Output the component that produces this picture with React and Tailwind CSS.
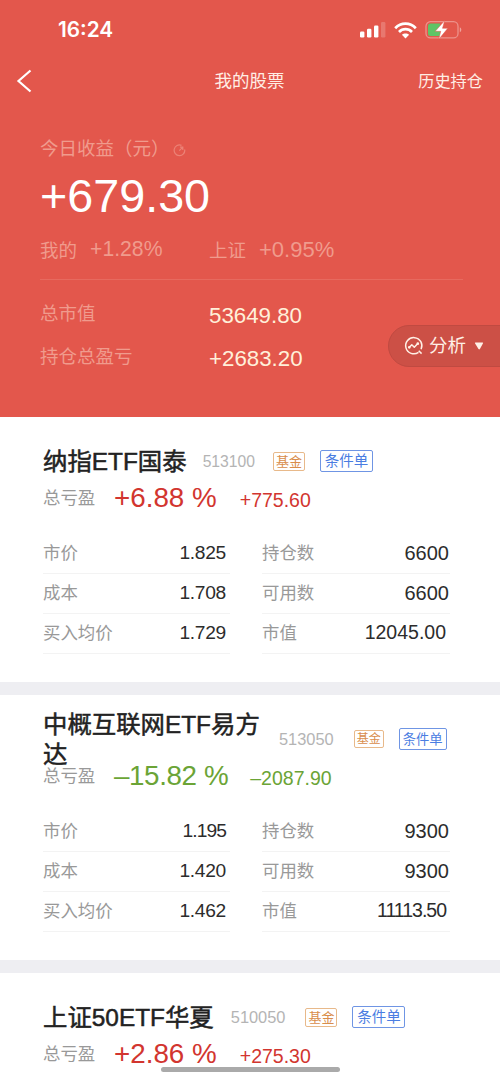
import React from "react";

const holdings = [
  {
    name: "纳指ETF国泰",
    code: "513100",
    codeClass: "ml-4 text-[15.700px]",
    percent: "+6.88 %",
    profit: "+775.60",
    up: true,
    left: [
      ["市价", "1.825"],
      ["成本", "1.708"],
      ["买入均价", "1.729"],
    ],
    right: [
      ["持仓数", "6600"],
      ["可用数", "6600"],
      ["市值", "12045.00"],
    ],
  },
  {
    name: "中概互联网ETF易方达",
    code: "513050",
    codeClass: "ml-4 text-[16.400px]",
    percent: "–15.82 %",
    profit: "–2087.90",
    up: false,
    compact: true,
    left: [
      ["市价", "1.195"],
      ["成本", "1.420"],
      ["买入均价", "1.462"],
    ],
    right: [
      ["持仓数", "9300"],
      ["可用数", "9300"],
      ["市值", "11113.50"],
    ],
  },
  {
    name: "上证50ETF华夏",
    code: "510050",
    codeClass: "ml-[17px] mr-0.5 text-[16.400px]",
    percent: "+2.86 %",
    profit: "+275.30",
    up: true,
    left: [],
    right: [],
  },
];

/* =======================
   STATUS BAR
======================= */
function StatusBar() {
  return (
    <div className="flex h-[60px] items-center justify-between pl-[58px] pr-[38px] text-white">
      <span className="font-['Inter'] text-[20.800px] font-semibold leading-none">16:24</span>
      <div className="flex items-center">
        <svg width="26" height="16" viewBox="0 0 26 16" fill="#fff">
          <rect x="0" y="9.5" width="4.4" height="6" rx="1.2" />
          <rect x="7" y="6.8" width="4.4" height="8.7" rx="1.2" />
          <rect x="14" y="3.6" width="4.4" height="11.9" rx="1.2" />
          <rect x="21" y="0" width="4.4" height="15.5" rx="1.2" opacity="0.2" />
        </svg>
        <svg className="ml-2" width="23" height="17" viewBox="0 0 23 17" fill="none" stroke="#fff" strokeWidth="2.7">
          <path d="M1.2 6.2C7 .2 16 .2 21.8 6.2" />
          <path d="M5 10c3.700-3.800 9.300-3.800 13 0" />
          <path d="M11.500 16.400l3.600-3.600c-2-1.900-5.200-1.900-7.200 0z" fill="#fff" stroke="none" />
        </svg>
        <svg className="ml-2" width="37" height="20" viewBox="0 0 37 20" fill="none">
          <rect x="1" y="1.700" width="32" height="16.200" rx="4.500" stroke="#fff" strokeOpacity="0.35" strokeWidth="1.300" />
          <path d="M34.800 7.300c2 .8 2 4.200 0 5z" fill="#fff" fillOpacity="0.45" />
          <path d="M5.500 3.500H15v12.600H5.500a2.500 2.500 0 0 1-2.500-2.500V6a2.500 2.500 0 0 1 2.500-2.500z" fill="#5fc466" />
          <path d="M19.700.6l-9.500 10.700h5.500l-1.900 8 9-11h-5.300z" fill="#fff" stroke="#e3574c" strokeWidth="0.500" />
        </svg>
      </div>
    </div>
  );
}

function NavBar() {
  return (
    <div className="grid h-[42px] grid-cols-[1fr_auto_1fr] items-center pl-4 pr-[17px] text-[#ffeee5]">
      <svg width="16" height="24" viewBox="0 0 16 24" fill="none" stroke="#fff" strokeWidth="2.2">
        <path d="M14.500 1.500L2.500 12l12 10.500" />
      </svg>
      <span className="pt-px text-[17.500px]">我的股票</span>
      <span className="justify-self-end pt-px text-[16.200px]">历史持仓</span>
    </div>
  );
}

/* =======================
   SUMMARY
======================= */
function Summary() {
  return (
    <div className="pl-10 pr-[37px] text-[18.500px] leading-none text-[#f09b8d]">
      <div className="mt-[34px] flex h-[26px] items-center">
        <span className="whitespace-nowrap pt-px">今日收益（元）</span>
        <svg className="ml-[3px] mt-0.5" width="13" height="13" viewBox="0 0 13 13" fill="none" stroke="#ec8276" strokeWidth="1.200">
          <path d="M8.500 1.400A5.300 5.300 0 1 0 11.700 5.500" />
          <path d="M6.300 6.700L9.600 3.300M7 3.200h2.800v2.700" />
        </svg>
      </div>
      <div className="mt-[11px] flex h-[46px] items-center text-[46.700px] text-white">+679.30</div>
      <div className="mt-[18px] flex h-[26px] items-center">
        <div className="flex w-[169px] items-center gap-[13px]">
          <span className="pt-0.5">我的</span>
          <span className="pb-0.5 text-[21.200px]">+1.28%</span>
        </div>
        <span className="pt-0.5">上证</span>
        <span className="ml-[13px] text-[22px]">+0.95%</span>
      </div>
      <div className="mt-4 border-t border-[#e76a5f]" />
      <div className="mt-[22px] flex h-[43px] pt-[3px]">
        <span className="w-[169px]">总市值</span>
        <span className="text-[22.300px] text-[#fff0da]">53649.80</span>
      </div>
      <div className="flex h-[43px] pt-[3px]">
        <span className="w-[169px]">持仓总盈亏</span>
        <span className="text-[22.300px] text-[#fff0da]">+2683.20</span>
      </div>
    </div>
  );
}

function AnalysisButton() {
  return (
    <button className="absolute right-[-1px] top-[325px] flex h-[42px] w-[113px] items-center rounded-l-full border border-[#c04a41] bg-[#cc5046] pl-[15px] text-[18.500px] text-[#fff0e6]">
      <svg width="20" height="20" viewBox="0 0 20 20" fill="none" stroke="currentColor" strokeWidth="1.500">
        <path d="M14.500 16.300A8.100 8.100 0 1 1 17.100 13.200M14.700 14.700l2.900 2.900" />
        <path d="M5.300 11.300l2.500-2.600 2.500 2.500 3.500-3.700" strokeLinecap="round" strokeLinejoin="round" />
        <circle cx="5.300" cy="11.300" r="0.600" fill="currentColor" />
        <circle cx="13.800" cy="7.700" r="0.600" fill="currentColor" />
      </svg>
      <span className="ml-[5px]">分析</span>
      <svg className="ml-2" width="11" height="8" viewBox="0 0 11 8" fill="currentColor">
        <path d="M1.500.5h7q1 0 .4.900L5.900 7q-.7.900-1.400 0L1.100 1.400Q.5.500 1.500.5z" />
      </svg>
    </button>
  );
}

/* =======================
   HOLDING CARD
======================= */
function valueClass(value) {
  if (value.startsWith("111")) return "pr-1 text-[19.500px] tracking-[-1px]";
  if (value === "1.195") return "pr-1 text-[19.200px] tracking-[-0.9px]";
  if (value.startsWith("1.")) return "pr-1 text-[19.200px] tracking-[-0.300px]";
  if (value.includes(".")) return "pr-1 text-[19.500px]";
  return "pr-px text-[20px]";
}

function Column({ rows, className }) {
  return (
    <div className={className}>
      {rows.map(([label, value]) => (
        <div key={label} className="flex h-10 items-center justify-between border-b border-[#f3f3f3]">
          <span className="text-[17.400px] text-[#999]">{label}</span>
          <span className={`pb-0.5 text-[#2c2c2c] ${valueClass(value)}`}>{value}</span>
        </div>
      ))}
    </div>
  );
}

function HoldingCard({ item }) {
  const color = item.up ? "text-[#d2352f]" : "text-[#6ba436]";

  return (
    <section className="h-[278px] border-b-[13px] border-[#eeeef2] bg-white pl-[43px] pt-7 leading-none">
      <div className="flex h-8 items-center">
        <h2 className="max-w-[220px] shrink-0 pt-0.5 text-[24.400px] leading-[30px] text-[#222] [-webkit-text-stroke:0.5px]">
          {item.name}
        </h2>
        <span className={`pt-px text-[#b4b4b4] ${item.codeClass}`}>{item.code}</span>
        <span
          className={`flex items-center justify-center rounded-[2px] border border-[#e8b98a] text-[#d98d4b] ${
            item.compact ? "ml-5 h-[18px] w-[30px] text-[12px]" : "ml-[18px] h-[19px] w-8 text-[13px]"
          }`}
        >
          基金
        </span>
        <span
          className={`flex h-[22px] items-center justify-center rounded-[2px] border border-[#6f95e4] pt-px text-[#4a7de2] ${
            item.compact ? "ml-[15px] w-12 text-[13.300px]" : "ml-[15px] w-[53px] text-[14.500px]"
          }`}
        >
          条件单
        </span>
      </div>
      <div className="flex h-[42px] items-center">
        <span className="w-[71px] pt-0.5 text-[17.400px] text-[#999]">总亏盈</span>
        <div className={`flex items-baseline ${color} ${item.compact ? "gap-[22px]" : "gap-[23px]"}`}>
          <span className={`text-[27.800px] ${item.compact ? "tracking-[-0.400px]" : ""}`}>{item.percent}</span>
          <span className="text-[19.500px]">{item.profit}</span>
        </div>
      </div>
      <div className="mt-[15px] flex gap-8">
        <Column rows={item.left} className="w-[187px]" />
        <Column rows={item.right} className="w-[188px]" />
      </div>
    </section>
  );
}

export default function App() {
  return (
    <div className="relative h-[1082px] w-[500px] overflow-hidden bg-white font-['Liberation_Sans','Noto_Sans_CJK_SC',sans-serif]">
      <header className="h-[417px] bg-[#e3574c]">
        <StatusBar />
        <NavBar />
        <Summary />
      </header>
      <AnalysisButton />
      <main>
        {holdings.map((item) => (
          <HoldingCard key={item.code} item={item} />
        ))}
      </main>
      <div className="absolute left-[161px] top-[1067px] h-[5px] w-[179px] rounded-full bg-[#aaa]" />
    </div>
  );
}
